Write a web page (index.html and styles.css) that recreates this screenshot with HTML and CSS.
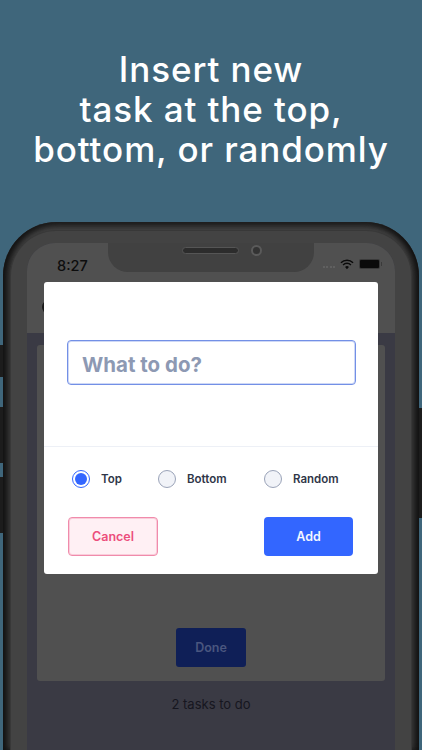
FILE: index.html
```html
<!DOCTYPE html>
<html>
    <head>
        <title>Insert new task</title>
        <link rel="stylesheet" href="styles.css">
    </head>

    <body>
        <h1 class="headline">Insert new<br>task at the top,<br>bottom, or randomly</h1>

        <div class="phone">
            <div class="side_btn side_mute"></div>
            <div class="side_btn side_up"></div>
            <div class="side_btn side_down"></div>
            <div class="side_btn side_power"></div>

            <div class="bezel">
                <div class="screen">
                    <div class="status">
                        <span class="clock">8:27</span>
                        <div class="notch">
                            <div class="speaker"></div>
                            <div class="camera"></div>
                        </div>
                        <div class="status_icons">
                            <span class="dots"><i></i><i></i><i></i><i></i></span>
                            <svg class="wifi" width="14" height="11" viewBox="0 0 15 11">
                                <path d="M1 3.6 A9.4 9.4 0 0 1 14 3.6" fill="none" stroke="#0a0a0a" stroke-width="1.6"/>
                                <path d="M3.3 6 A6 6 0 0 1 11.7 6" fill="none" stroke="#0a0a0a" stroke-width="1.6"/>
                                <path d="M5.4 8.2 A3 3 0 0 1 9.6 8.2 L7.5 10.6 Z" fill="#0a0a0a"/>
                            </svg>
                            <div class="battery"><div class="battery_fill"></div></div>
                        </div>
                    </div>

                    <div class="app_header"><div class="back"></div></div>

                    <div class="app_body">
                        <div class="card">
                            <div class="done_btn">Done</div>
                        </div>
                        <p class="count">2 tasks to do</p>
                    </div>
                </div>
            </div>
        </div>

        <div class="modal">
            <div class="modal_top">
                <div class="input">What to do?</div>
            </div>
            <div class="modal_bottom">
                <div class="radios">
                    <div class="radio_item">
                        <span class="radio radio_on"></span>
                        <span class="radio_label">Top</span>
                    </div>
                    <div class="radio_item">
                        <span class="radio"></span>
                        <span class="radio_label">Bottom</span>
                    </div>
                    <div class="radio_item">
                        <span class="radio"></span>
                        <span class="radio_label">Random</span>
                    </div>
                </div>
                <div class="buttons">
                    <div class="btn btn_cancel">Cancel</div>
                    <div class="btn btn_add">Add</div>
                </div>
            </div>
        </div>
    </body>
</html>
```

FILE: styles.css
```css
html, body {
    margin: 0;
    padding: 0;
}

body {
    position: relative;
    width: 422px;
    height: 750px;
    overflow: hidden;
    background: #3f667b;
    font-family: Inter, "Liberation Sans", sans-serif;
}

.headline {
    margin: 0;
    padding-top: 49px;
    height: 222px;
    box-sizing: border-box;
    color: #fff;
    font-family: Inter, "Open Sans", sans-serif;
    font-size: 35px;
    font-weight: 450;
    line-height: 40px;
    letter-spacing: 0.9px;
    text-align: center;
}

.phone {
    position: relative;
    margin: 0 3px;
    height: 528px;
    border-radius: 54px 54px 0 0;
    background: #414141;
    box-shadow: inset 7px 0 7px -2px #111, inset -7px 0 7px -2px #111, inset 0 5px 4px #2a2a2a;
    padding: 8px 7px 0;
    box-sizing: border-box;
}

.side_btn {
    position: absolute;
    width: 3px;
    background: #1c1c1c;
}

.side_mute { left: -3px; top: 123px; height: 32px; }
.side_up { left: -3px; top: 185px; height: 56px; }
.side_down { left: -3px; top: 255px; height: 56px; }
.side_power { right: -3px; top: 186px; height: 110px; }

.bezel {
    height: 100%;
    border-radius: 46px 46px 0 0;
    background: #434343;
    border: 1px solid #383838;
    border-bottom: 0;
    padding: 12px 16px 0;
    box-sizing: border-box;
}

.screen {
    height: 100%;
    border-radius: 28px 28px 0 0;
    background: #3a3a44;
    overflow: hidden;
}

.status {
    display: flex;
    justify-content: space-between;
    height: 50px;
    background: #505050;
    position: relative;
}

.clock {
    margin: 14px 0 0 30px;
    font-size: 14.5px;
    line-height: 17px;
    font-weight: 500;
    color: #0d0d0d;
}

.notch {
    position: absolute;
    left: 81px;
    top: 0;
    width: 206px;
    height: 29px;
    border-radius: 0 0 20px 20px;
    background: #414141;
    display: flex;
    justify-content: center;
    align-items: center;
    gap: 12px;
    padding: 0 0 15px 22px;
    box-sizing: border-box;
}

.speaker {
    width: 57px;
    height: 7px;
    border-radius: 4px;
    background: #2c2c2c;
    border: 1px solid #555;
    box-sizing: border-box;
}

.camera {
    width: 11px;
    height: 11px;
    border-radius: 50%;
    background: #333;
    border: 2px solid #5a5a5a;
    box-sizing: border-box;
}

.status_icons {
    display: flex;
    align-items: center;
    gap: 5px;
    margin: 15px 15px 0 0;
    height: 12px;
}

.dots {
    display: flex;
    gap: 1.5px;
    margin-top: 6px;
}

.dots i {
    width: 2px;
    height: 2px;
    border-radius: 50%;
    background: #666;
}

.battery {
    position: relative;
    width: 21px;
    height: 10px;
    border-radius: 2px;
    background: #3a3a3a;
    padding: 1px;
    box-sizing: border-box;
}

.battery::after {
    content: "";
    position: absolute;
    right: -2px;
    top: 3px;
    width: 1px;
    height: 4px;
    background: #3a3a3a;
}

.battery_fill {
    height: 100%;
    border-radius: 1px;
    background: #0a0a0a;
}

.app_header {
    height: 40px;
    background: #505050;
}

.back {
    width: 10px;
    height: 12px;
    margin-left: 15px;
    border-radius: 50%;
    background: #1a1a1a;
    transform: translateY(8px);
}

.app_body {
    padding: 0 10px;
}

.card {
    height: 336px;
    margin-top: 12px;
    background: #505050;
    border-radius: 3px;
    display: flex;
    justify-content: center;
    align-items: flex-end;
    padding-bottom: 14px;
    box-sizing: border-box;
}

.done_btn {
    width: 70px;
    height: 39px;
    border-radius: 3px;
    background: #0f1f57;
    color: #4a567f;
    font-size: 12.5px;
    font-weight: 600;
    line-height: 39px;
    text-align: center;
}

.count {
    margin: 15px 0 0;
    color: #16161f;
    font-size: 13px;
    text-align: center;
}

.modal {
    position: absolute;
    left: 44px;
    top: 282px;
    width: 334px;
    height: 292px;
    background: #fff;
    border-radius: 3px;
}

.modal_top {
    height: 165px;
    padding: 58px 22px 0 23px;
    box-sizing: border-box;
    border-bottom: 1px solid #edf0f6;
}

.input {
    height: 45px;
    border: 1px solid #7390e6;
    box-shadow: inset 0 0 0 1px rgba(115, 144, 230, 0.35);
    border-radius: 4px;
    box-sizing: border-box;
    padding-left: 14px;
    color: #8d99b3;
    font-size: 20.5px;
    font-weight: 700;
    line-height: 48px;
}

.modal_bottom {
    padding: 21px 25px 0 28px;
}

.radios {
    display: grid;
    grid-template-columns: 86px 106px auto;
}

.radio_item {
    display: flex;
    align-items: center;
    gap: 11px;
    height: 22px;
}

.radio {
    width: 18px;
    height: 18px;
    border: 1px solid #9aa3b8;
    border-radius: 50%;
    background: #f1f3f8;
    box-sizing: border-box;
    display: flex;
    align-items: center;
    justify-content: center;
}

.radio_on {
    border-color: #3366ff;
    background: #fff;
}

.radio_on::after {
    content: "";
    width: 12px;
    height: 12px;
    border-radius: 50%;
    background: #3366ff;
}

.radio_label {
    color: #2f3648;
    font-size: 11.5px;
    font-weight: 600;
}

.buttons {
    display: flex;
    justify-content: space-between;
    margin-top: 27px;
    margin-left: -4px;
}

.btn {
    width: 90px;
    height: 39px;
    border-radius: 4px;
    box-sizing: border-box;
    font-size: 12.5px;
    font-weight: 600;
    text-align: center;
    line-height: 37px;
}

.btn_cancel {
    border: 1px solid #f08bab;
    box-shadow: inset 0 0 0 1px rgba(240, 139, 171, 0.35);
    background: #fff0f4;
    color: #ec4e7c;
}

.btn_add {
    width: 89px;
    background: #3366ff;
    color: #f3f6ff;
    line-height: 39px;
}
```
